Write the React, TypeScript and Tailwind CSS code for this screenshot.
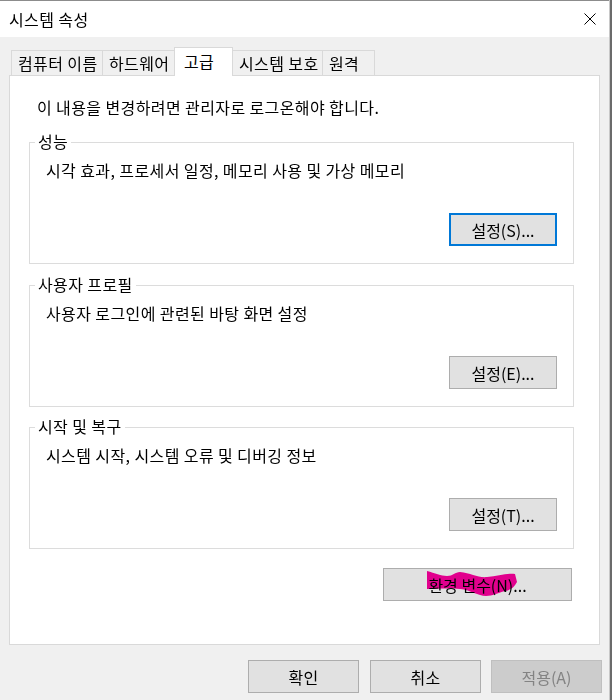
import React from "react";

const font = { fontFamily: '"Noto Sans CJK KR", "Noto Sans", sans-serif' };
const T = "text-[16px] leading-[20px] tracking-[0.4px]";
const B = "text-[16px] leading-[20px] tracking-[0px]";

function Tab({ label, w, selected, first }: { label: string; w: string; selected?: boolean; first?: boolean }) {
  if (selected) {
    return (
      <div
        className={`relative z-10 -ml-px -mb-px h-[29px] ${w} border border-b-0 border-[#d9d9d9] bg-white pl-[9px] pt-[3px] ${T} text-black whitespace-nowrap`}
      >
        {label}
      </div>
    );
  }
  return (
    <div
      className={`${first ? "" : "-ml-px"} h-[25px] ${w} border border-b-0 border-[#d9d9d9] bg-[#f0f0f0] pl-[6px] pt-[2px] ${T} text-black whitespace-nowrap`}
    >
      {label}
    </div>
  );
}

function Group({ title, text, btn, mt }: { title: string; text: string; btn: string; mt: string }) {
  return (
    <div className={`relative ${mt} ml-[19px] flex h-[122px] w-[545px] flex-col border border-[#dcdcdc]`}>
      <span className={`absolute left-[5px] top-[-12px] bg-white px-[3px] ${T} text-black`}>
        {title}
      </span>
      <div className={`pl-[16px] pt-[17px] ${T} text-black`}>{text}</div>
      <div className="mt-auto mb-[17px] mr-[16px] flex justify-end">
        {btn === "설정(S)..." ? (
          <div className={`flex h-[33px] w-[108px] items-center justify-center border-2 border-[#0078d7] bg-[#e1e1e1] ${B} text-black`}>
            {btn}
          </div>
        ) : (
          <div className={`flex h-[33px] w-[108px] items-center justify-center border border-[#adadad] bg-[#e1e1e1] ${B} text-black`}>
            {btn}
          </div>
        )}
      </div>
    </div>
  );
}

export default function App() {
  return (
    <div className="flex h-[700px] w-[612px] bg-[#f0f0f0]" style={font}>
      <div className="flex w-[609px] flex-col">
        <div className="h-px bg-[#8c8c8c]" />
        <div className="flex h-[36px] items-center justify-between bg-white pl-[9px] pr-[13px]">
          <span className={`${T} text-black`}>시스템 속성</span>
          <svg width="12" height="12" viewBox="0 0 12 12">
            <path d="M0.5 0.5 L11.5 11.5 M11.5 0.5 L0.5 11.5" stroke="#000" strokeWidth="1" />
          </svg>
        </div>

        <div className="mt-[10px] flex items-end pl-[11px]">
          <Tab label="컴퓨터 이름" w="w-[92px]" first />
          <Tab label="하드웨어" w="w-[73px]" />
          <Tab label="고급" w="w-[59px]" selected />
          <Tab label="시스템 보호" w="w-[91px]" />
          <Tab label="원격" w="w-[53px]" />
        </div>

        <div className="ml-[9px] flex h-[570px] w-[591px] flex-col border border-[#d9d9d9] bg-white">
          <div className={`pl-[27px] pt-[21px] ${T} text-black`}>
            이 내용을 변경하려면 관리자로 로그온해야 합니다.
          </div>
          <Group mt="mt-[25px]" title="성능" text="시각 효과, 프로세서 일정, 메모리 사용 및 가상 메모리" btn="설정(S)..." />
          <Group mt="mt-[21px]" title="사용자 프로필" text="사용자 로그인에 관련된 바탕 화면 설정" btn="설정(E)..." />
          <Group mt="mt-[20px]" title="시작 및 복구" text="시스템 시작, 시스템 오류 및 디버깅 정보" btn="설정(T)..." />
          <div className="mt-[19px] mr-[27px] flex justify-end">
            <div className={`relative flex h-[33px] w-[189px] items-center justify-center border border-[#adadad] bg-[#e1e1e1] ${B} text-black`}>
              환경 변수(N)...
              <svg
                className="pointer-events-none absolute left-[-1px] top-[-1px] mix-blend-multiply"
                width="189"
                height="33"
                viewBox="0 0 189 33"
              >
                <path
                  d="M44,3 C52,5 58,8 64,8 C70,8 72,4 77,4 C88,5 95,10 104,9 C115,8 124,5 132,6 L134,14 C131,20 127,22 122,23 C114,25 110,28 103,28 C95,28 88,22 77,21 C65,20 52,21 44,21 Z"
                  fill="#ff00a0"
                />
              </svg>
            </div>
          </div>
        </div>

        <div className="mt-[15px] flex">
          <div className={`ml-[248px] flex h-[33px] w-[111px] items-center justify-center border border-[#adadad] bg-[#e1e1e1] ${T} text-black`}>
            확인
          </div>
          <div className={`ml-[11px] flex h-[33px] w-[111px] items-center justify-center border border-[#adadad] bg-[#e1e1e1] ${T} text-black`}>
            취소
          </div>
          <div className={`ml-[10px] flex h-[33px] w-[111px] items-center justify-center border border-[#bfbfbf] bg-[#cccccc] ${B} text-[#838383]`}>
            적용(A)
          </div>
        </div>
      </div>
      <div className="w-px bg-[#c8c8c8]" />
      <div className="w-[2px] bg-[#6b6b6b]" />
    </div>
  );
}
